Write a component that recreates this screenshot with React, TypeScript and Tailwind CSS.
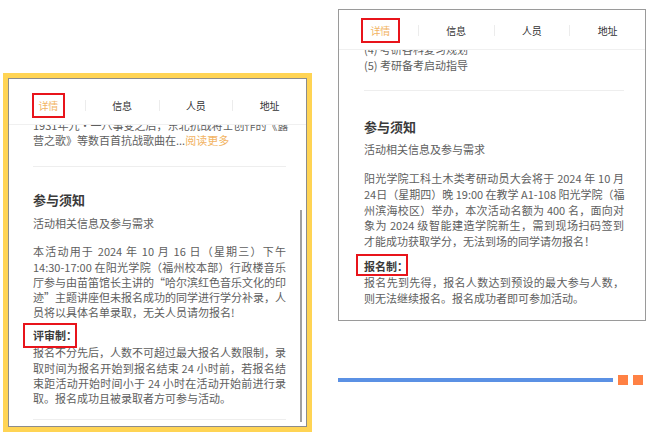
import React from 'react';

const tabs = ['详情', '信息', '人员', '地址'];

const leftIntro = ['1931年九·一八事变之后，东北抗战将士创作的《露'];

const leftRules = [
  '本活动用于 2024 年 10 月 16 日（星期三）下午',
  '14:30-17:00 在阳光学院（福州校本部）行政楼音乐',
  '厅参与由苗笛馆长主讲的“哈尔滨红色音乐文化的印',
  '迹”主题讲座但未报名成功的同学进行学分补录，人',
  '员将以具体名单录取，无关人员请勿报名!',
];

const leftReview = [
  '报名不分先后，人数不可超过最大报名人数限制，录',
  '取时间为报名开始到报名结束 24 小时前，若报名结',
  '束距活动开始时间小于 24 小时在活动开始前进行录',
  '取。报名成功且被录取者方可参与活动。',
];

const rightIntro = ['(4) 考研各科复习规划', '(5) 考研备考启动指导'];

const rightRules = [
  '阳光学院工科土木类考研动员大会将于 2024 年 10 月',
  '24日（星期四）晚 19:00 在教学 A1-108 阳光学院（福',
  '州滨海校区）举办，本次活动名额为 400 名，面向对',
  '象为 2024 级智能建造学院新生，需到现场扫码签到',
  '才能成功获取学分，无法到场的同学请勿报名！',
];

const rightSignup = ['报名先到先得，报名人数达到预设的最大参与人数，', '则无法继续报名。报名成功者即可参加活动。'];

// each line laid out on its own so the wraps land where the screenshot has them
function Lines({ lines, lh }: { lines: string[]; lh: string }) {
  return (
    <div className={lh}>
      {lines.map((line, i) => (
        <div key={i} className={i < lines.length - 1 ? 'text-justify [text-align-last:justify] whitespace-nowrap' : 'whitespace-nowrap'}>
          {line}
        </div>
      ))}
    </div>
  );
}

function TabBar({ wide }: { wide: boolean }) {
  return (
    <div className={`flex items-center border-b border-[#f0f0f0] ${wide ? 'pl-[4px] pt-[8px] pb-[6px]' : 'pl-[3px] pt-[14px] pb-[6px]'}`}>
      {tabs.map((t, i) => (
        <React.Fragment key={t}>
          {i > 0 && <span className="h-[11px] w-px bg-[#ececec]" />}
          <div className="flex h-[25px] flex-1 items-center justify-center text-[10px] text-[#333]">
            {i === 0 ? (
              <span className={`h-[25px] border-2 border-[#e8141b] leading-[21px] text-[#f2b463] ${wide ? 'px-[7.5px]' : 'px-[4.5px]'}`}>{t}</span>
            ) : (
              t
            )}
          </div>
        </React.Fragment>
      ))}
    </div>
  );
}

export default function App() {
  return (
    <div className="flex h-[440px] w-[653px] items-start overflow-hidden bg-white font-['Noto_Sans_CJK_SC',sans-serif] text-[11px] text-[#5e5e5e]">
      {/* left phone capture in the yellow frame */}
      <div className="ml-[3px] mt-[73px] h-[359px] w-[309px] bg-[#ffd454] p-[5px]">
        <div className="relative flex h-full w-full flex-col border border-[#8c8c8c] bg-white">
          <TabBar wide={false} />
          <div className="flex-1 overflow-hidden pl-[24px] pr-[20px]">
            <div className="-mt-[7px]">
              <div className="leading-[15.25px]">
                <Lines lines={leftIntro} lh="leading-[15.25px]" />
                <div className="whitespace-nowrap">
                  营之歌》等数百首抗战歌曲在...<span className="text-[#f2b463]">阅读更多</span>
                </div>
              </div>
              <div className="mt-[17px] h-px bg-[#eeeeee]" />
              <div className="mt-[24.5px] text-[13px] font-semibold leading-[18px] text-[#3a3a3a]">参与须知</div>
              <div className="mt-[7.4px] leading-[15.25px]">活动相关信息及参与需求</div>
              <div className="mt-[12.75px]">
                <Lines lines={leftRules} lh="leading-[15.25px]" />
              </div>
              <div className="mt-[7.75px] leading-[15.25px]">
                <span className="relative inline-block font-semibold text-[#3a3a3a]">
                  评审制：
                  <span className="absolute -left-[10px] -top-[5.4px] h-[25px] w-[54px] border-2 border-[#e8141b]" />
                </span>
              </div>
              <div className="mt-[1.75px]">
                <Lines lines={leftReview} lh="leading-[15.25px]" />
              </div>
              <div className="mt-[12.6px] h-px bg-[#eeeeee]" />
            </div>
          </div>
          <div className="absolute left-[291px] top-[131px] h-[212px] w-[2px] bg-[#a0a0a0]" />
        </div>
      </div>

      {/* right phone capture */}
      <div className="ml-[26px] mt-[9px] flex flex-col">
        <div className="flex h-[312px] w-[308px] flex-col border border-[#9a9a9a] bg-white">
          <TabBar wide={true} />
          <div className="flex-1 overflow-hidden pl-[25px] pr-[21px]">
            <div className="-mt-[8px]">
              <div className="leading-[15.75px]">
                {rightIntro.map(line => (
                  <div key={line} className="whitespace-nowrap">{line}</div>
                ))}
              </div>
              <div className="mt-[16.5px] h-px bg-[#eeeeee]" />
              <div className="mt-[27px] text-[13px] font-semibold leading-[18px] text-[#3a3a3a]">参与须知</div>
              <div className="mt-[6.1px] leading-[15.75px]">活动相关信息及参与需求</div>
              <div className="mt-[13.2px]">
                <Lines lines={rightRules} lh="leading-[15.75px]" />
              </div>
              <div className="mt-[9.25px] leading-[15.75px]">
                <span className="relative inline-block font-semibold text-[#3a3a3a]">
                  报名制：
                  <span className="absolute -left-[8px] -top-[5.1px] h-[22px] w-[52px] border-2 border-[#e8141b]" />
                </span>
              </div>
              <div className="mt-[0.25px]">
                <Lines lines={rightSignup} lh="leading-[15.75px]" />
              </div>
            </div>
          </div>
        </div>
        <div className="mt-[54px] flex items-center gap-[5px]">
          <div className="h-[4px] w-[275px] bg-[#5b91e4]" />
          <div className="h-[10px] w-[10px] bg-[#ff8144]" />
          <div className="h-[10px] w-[10px] bg-[#ff8144]" />
        </div>
      </div>
    </div>
  );
}
